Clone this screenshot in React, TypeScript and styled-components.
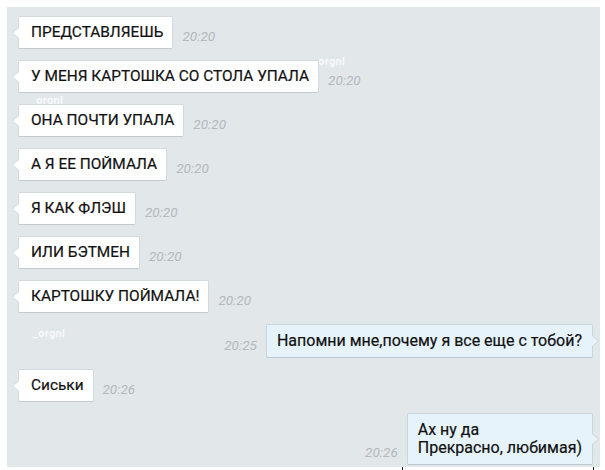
import styled, { createGlobalStyle } from "styled-components";

type Msg = { text: string; time: string; out?: boolean };

const MESSAGES: Msg[] = [
  { text: "ПРЕДСТАВЛЯЕШЬ", time: "20:20" },
  { text: "У МЕНЯ КАРТОШКА СО СТОЛА УПАЛА", time: "20:20" },
  { text: "ОНА ПОЧТИ УПАЛА", time: "20:20" },
  { text: "А Я ЕЕ ПОЙМАЛА", time: "20:20" },
  { text: "Я КАК ФЛЭШ", time: "20:20" },
  { text: "ИЛИ БЭТМЕН", time: "20:20" },
  { text: "КАРТОШКУ ПОЙМАЛА!", time: "20:20" },
  { text: "Напомни мне,почему я все еще с тобой?", time: "20:25", out: true },
  { text: "Сиськи", time: "20:26" },
  { text: "Ах ну да\nПрекрасно, любимая)", time: "20:26", out: true },
];

const MARKS = [
  { x: 306, y: 48 },
  { x: 24, y: 87 },
  { x: 26, y: 320 },
];

export default function App() {
  return (
    <>
      <GlobalStyle />
      <Page>
        <Chat>
          {MARKS.map((m, i) => (
            <Watermark key={i} style={{ left: m.x, top: m.y }}>
              _orgnl
            </Watermark>
          ))}
          {MESSAGES.map((m, i) => (
            <Row key={i} $out={!!m.out}>
              {m.out && <Time>{m.time}</Time>}
              <Bubble $out={!!m.out}>{m.text}</Bubble>
              {!m.out && <Time>{m.time}</Time>}
            </Row>
          ))}
        </Chat>
        <Footer>
          <Tick style={{ left: 395 }} />
          <Tick style={{ left: 586 }} />
        </Footer>
      </Page>
    </>
  );
}

/* ---------- styled ---------- */
const GlobalStyle = createGlobalStyle`
  html, body {
    margin: 0;
    padding: 0;
    background: #ffffff;
  }
  body {
    font-family: Roboto, "Noto Sans", "Liberation Sans", sans-serif;
  }
`;

const Page = styled.div`
  width: 605px;
  height: 470px;
  padding: 7px 5px 0 7px;
  box-sizing: border-box;
  background: #fff;
  position: relative;
  overflow: hidden;
`;

const Chat = styled.div`
  position: relative;
  height: 460px;
  overflow: hidden;
  background: #e2e7ea;
  display: flex;
  flex-direction: column;
  gap: 11px;
  padding: 9px 7px 0 11px;
  box-sizing: border-box;
`;

const Row = styled.div<{ $out: boolean }>`
  display: flex;
  flex-shrink: 0;
  align-items: flex-end;
  justify-content: ${({ $out }) => ($out ? "flex-end" : "flex-start")};
  gap: 9px;
`;

const Bubble = styled.div<{ $out: boolean }>`
  position: relative;
  white-space: pre-line;
  font-size: ${({ $out }) => ($out ? "16px" : "15.4px")};
  line-height: ${({ $out }) => ($out ? "18px" : "17px")};
  color: #111;
  -webkit-text-stroke: 0.2px #111;
  padding: ${({ $out }) => ($out ? "7px 10px 7px 10px" : "7px 9px 7px 12px")};
  background: ${({ $out }) => ($out ? "#e6f3fa" : "#ffffff")};
  border: 1px solid ${({ $out }) => ($out ? "#c8d6de" : "#d3d9dd")};
  border-bottom-color: ${({ $out }) => ($out ? "#b9c8d0" : "#c4cbcf")};
  border-radius: 2px;

  &::before {
    content: "";
    position: absolute;
    top: 50%;
    margin-top: -6px;
    ${({ $out }) => ($out ? "right: -7px;" : "left: -7px;")}
    border-top: 6px solid transparent;
    border-bottom: 6px solid transparent;
    ${({ $out }) =>
      $out ? "border-left: 7px solid #c8d6de;" : "border-right: 7px solid #d3d9dd;"}
  }
  &::after {
    content: "";
    position: absolute;
    top: 50%;
    margin-top: -5px;
    ${({ $out }) => ($out ? "right: -6px;" : "left: -6px;")}
    border-top: 5px solid transparent;
    border-bottom: 5px solid transparent;
    ${({ $out }) =>
      $out ? "border-left: 6px solid #e6f3fa;" : "border-right: 6px solid #ffffff;"}
  }
`;

const Time = styled.span`
  font-size: 13.5px;
  font-style: italic;
  color: #b3b9bd;
  margin-bottom: 5px;
`;

const Watermark = styled.span`
  position: absolute;
  font-size: 11px;
  font-weight: 700;
  color: rgba(255, 255, 255, 0.75);
  letter-spacing: 0.3px;
`;

const Footer = styled.div`
  position: relative;
  height: 3px;
`;

const Tick = styled.span`
  position: absolute;
  top: 0;
  width: 1px;
  height: 3px;
  background: #222;
`;
